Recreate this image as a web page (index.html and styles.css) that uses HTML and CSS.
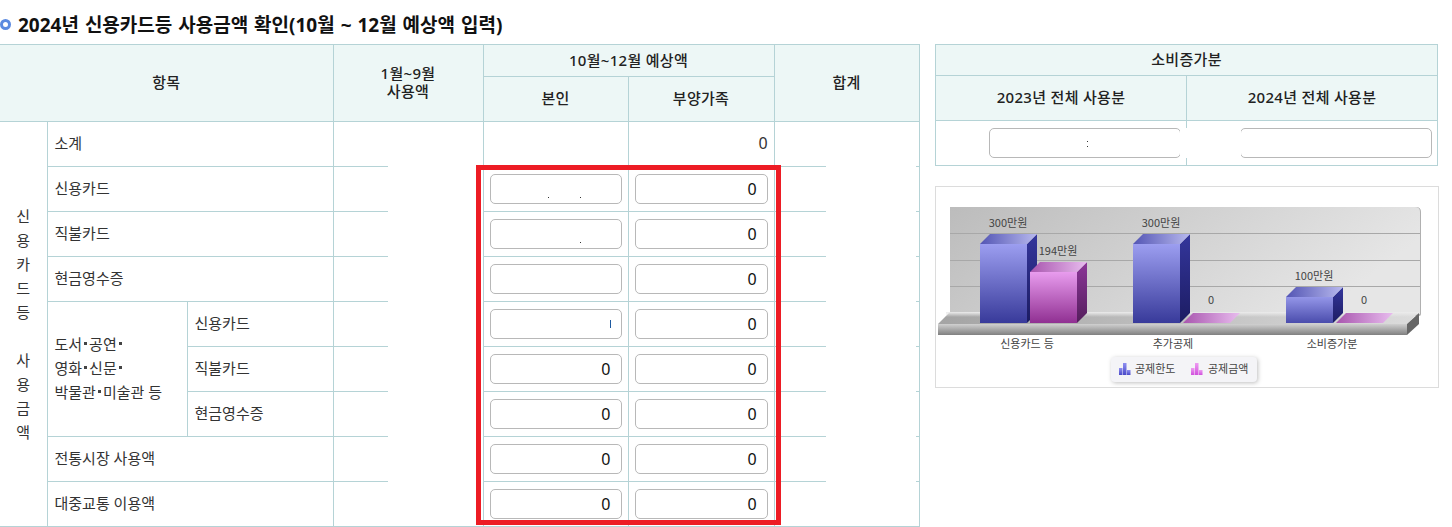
FILE: index.html
```html
<!DOCTYPE html>
<html lang="ko">
<head>
  <meta charset="UTF-8">
  <meta name="viewport" content="width=device-width, initial-scale=1.0">
  <title>신용카드등 사용금액 확인</title>
  <link rel="stylesheet" href="styles.css">
</head>
<body>

  <h2 class="section-title"><span class="title-ring"></span>2024년 신용카드등 사용금액 확인(10월 ~ 12월 예상액 입력)</h2>

  <div class="content">
    <!-- Usage table -->
    <div class="usage-wrap">
      <table class="usage-table">
        <colgroup>
          <col class="col-group">
          <col class="col-item">
          <col class="col-sub">
          <col class="col-used">
          <col class="col-self">
          <col class="col-family">
          <col class="col-total">
        </colgroup>
        <tr class="head-top">
          <th colspan="3" rowspan="2">항목</th>
          <th rowspan="2">1월~9월<br>사용액</th>
          <th colspan="2">10월~12월 예상액</th>
          <th rowspan="2">합계</th>
        </tr>
        <tr class="head-bottom">
          <th>본인</th>
          <th>부양가족</th>
        </tr>
        <tr>
          <td rowspan="9" class="group-label">신<br>용<br>카<br>드<br>등<br><br>사<br>용<br>금<br>액</td>
          <td colspan="2">소계</td>
          <td></td>
          <td></td>
          <td class="sum-value">0</td>
          <td></td>
        </tr>
        <tr>
          <td colspan="2">신용카드</td>
          <td></td>
          <td class="amount"><div class="field"><input type="text"><i class="speck speck-a"></i><i class="speck speck-b"></i></div></td>
          <td class="amount"><div class="field"><input type="text" value="0"></div></td>
          <td></td>
        </tr>
        <tr>
          <td colspan="2">직불카드</td>
          <td></td>
          <td class="amount"><div class="field"><input type="text"><i class="speck speck-b"></i></div></td>
          <td class="amount"><div class="field"><input type="text" value="0"></div></td>
          <td></td>
        </tr>
        <tr>
          <td colspan="2">현금영수증</td>
          <td></td>
          <td class="amount"><div class="field"><input type="text"></div></td>
          <td class="amount"><div class="field"><input type="text" value="0"></div></td>
          <td></td>
        </tr>
        <tr>
          <td rowspan="3" class="culture-label">도서<span class="mid-dot"></span>공연<span class="mid-dot"></span><br>영화<span class="mid-dot"></span>신문<span class="mid-dot"></span><br>박물관<span class="mid-dot"></span>미술관 등</td>
          <td>신용카드</td>
          <td></td>
          <td class="amount"><div class="field"><input type="text"><i class="speck speck-c"></i></div></td>
          <td class="amount"><div class="field"><input type="text" value="0"></div></td>
          <td></td>
        </tr>
        <tr>
          <td>직불카드</td>
          <td></td>
          <td class="amount"><div class="field"><input type="text" value="0"></div></td>
          <td class="amount"><div class="field"><input type="text" value="0"></div></td>
          <td></td>
        </tr>
        <tr>
          <td>현금영수증</td>
          <td></td>
          <td class="amount"><div class="field"><input type="text" value="0"></div></td>
          <td class="amount"><div class="field"><input type="text" value="0"></div></td>
          <td></td>
        </tr>
        <tr>
          <td colspan="2">전통시장 사용액</td>
          <td></td>
          <td class="amount"><div class="field"><input type="text" value="0"></div></td>
          <td class="amount"><div class="field"><input type="text" value="0"></div></td>
          <td></td>
        </tr>
        <tr>
          <td colspan="2">대중교통 이용액</td>
          <td></td>
          <td class="amount"><div class="field"><input type="text" value="0"></div></td>
          <td class="amount"><div class="field"><input type="text" value="0"></div></td>
          <td></td>
        </tr>
      </table>
      <div class="mask mask-used"></div>
      <div class="mask mask-total"></div>
      <div class="red-box"></div>
    </div>

    <div class="side">
      <!-- Increase table -->
      <div class="increase-wrap">
        <table class="increase-table">
          <tr class="inc-head-top">
            <th colspan="2">소비증가분</th>
          </tr>
          <tr class="inc-head-bottom">
            <th>2023년 전체 사용분</th>
            <th>2024년 전체 사용분</th>
          </tr>
          <tr class="inc-row">
            <td><div class="field field-wide"><input type="text"><i class="speck speck-d"></i><i class="speck speck-e"></i></div></td>
            <td><div class="field field-wide"><input type="text"></div></td>
          </tr>
        </table>
        <div class="mask mask-inc"></div>
      </div>

      <!-- Chart -->
      <div class="chart-box">
        <svg class="chart" viewBox="936 187 502 200" width="502" height="200">
          <defs>
            <linearGradient id="wall" x1="0" y1="0" x2="1" y2="0.3">
              <stop offset="0" stop-color="#bcbcbc"/>
              <stop offset="1" stop-color="#e6e6e6"/>
            </linearGradient>
            <linearGradient id="floorTop" x1="0" y1="0" x2="1" y2="0">
              <stop offset="0" stop-color="#a4a4a4"/>
              <stop offset="1" stop-color="#dcdcdc"/>
            </linearGradient>
            <linearGradient id="floorBand" x1="0" y1="0" x2="0" y2="1">
              <stop offset="0" stop-color="#ececec"/>
              <stop offset="1" stop-color="#ececec" stop-opacity="0"/>
            </linearGradient>
            <linearGradient id="floorFront" x1="0" y1="0" x2="0" y2="1">
              <stop offset="0" stop-color="#d0d0d0"/>
              <stop offset="1" stop-color="#808080"/>
            </linearGradient>
            <linearGradient id="blueFront" x1="0" y1="0" x2="0" y2="1">
              <stop offset="0" stop-color="#9c9ef0"/>
              <stop offset="1" stop-color="#383a9a"/>
            </linearGradient>
            <linearGradient id="blueFrontShort" x1="0" y1="0" x2="0" y2="1">
              <stop offset="0" stop-color="#9496e8"/>
              <stop offset="1" stop-color="#4a4cac"/>
            </linearGradient>
            <linearGradient id="blueSide" x1="0" y1="0" x2="0" y2="1">
              <stop offset="0" stop-color="#34369c"/>
              <stop offset="1" stop-color="#1c1c62"/>
            </linearGradient>
            <linearGradient id="blueTop" x1="0" y1="0" x2="1" y2="0">
              <stop offset="0" stop-color="#5355b4"/>
              <stop offset="1" stop-color="#b8b9ee"/>
            </linearGradient>
            <linearGradient id="pinkFront" x1="0" y1="0" x2="0" y2="1">
              <stop offset="0" stop-color="#e89cee"/>
              <stop offset="1" stop-color="#903092"/>
            </linearGradient>
            <linearGradient id="pinkSide" x1="0" y1="0" x2="0" y2="1">
              <stop offset="0" stop-color="#8c3698"/>
              <stop offset="1" stop-color="#541e5c"/>
            </linearGradient>
            <linearGradient id="pinkTop" x1="0" y1="0" x2="1" y2="0">
              <stop offset="0" stop-color="#a855ae"/>
              <stop offset="1" stop-color="#e8bcee"/>
            </linearGradient>
            <linearGradient id="iconBlue" x1="0" y1="0" x2="0" y2="1">
              <stop offset="0" stop-color="#8f8ff0"/>
              <stop offset="1" stop-color="#4a4ac8"/>
            </linearGradient>
            <linearGradient id="iconPink" x1="0" y1="0" x2="0" y2="1">
              <stop offset="0" stop-color="#ee9cf2"/>
              <stop offset="1" stop-color="#d050dc"/>
            </linearGradient>
          </defs>

          <path d="M951 207H1416Q1421 207 1421 212V314Q1421 316 1419 316H951Z" fill="#b0b0b0"/>
          <path d="M950 207H1415Q1420 207 1420 212V314H950Z" fill="url(#wall)"/>
          <path d="M950 233.5H1420M950 260.5H1420M950 286.5H1420" stroke="#a8a8a8" stroke-width="1" fill="none"/>

          <polygon points="938,324 950,312 1419,312 1407,324" fill="url(#floorTop)"/>
          <rect x="946" y="312" width="473" height="5" fill="url(#floorBand)"/>
          <rect x="938" y="324" width="469" height="11" fill="url(#floorFront)"/>
          <polygon points="1407,324 1419,313 1419,324 1407,335" fill="#666666"/>

          <polygon points="1027,244 1037,234 1037,313 1027,323" fill="url(#blueSide)"/>
          <polygon points="980,244 990,234 1037,234 1027,244" fill="url(#blueTop)"/>
          <rect x="980" y="244" width="47" height="79" fill="url(#blueFront)"/>

          <polygon points="1077,272 1087,262 1087,313 1077,323" fill="url(#pinkSide)"/>
          <polygon points="1030,272 1040,262 1087,262 1077,272" fill="url(#pinkTop)"/>
          <rect x="1030" y="272" width="47" height="51" fill="url(#pinkFront)"/>

          <polygon points="1180,244 1190,234 1190,313 1180,323" fill="url(#blueSide)"/>
          <polygon points="1133,244 1143,234 1190,234 1180,244" fill="url(#blueTop)"/>
          <rect x="1133" y="244" width="47" height="79" fill="url(#blueFront)"/>

          <polygon points="1183,323 1193,313 1240,313 1230,323" fill="url(#pinkTop)"/>

          <polygon points="1333,297 1343,287 1343,313 1333,323" fill="url(#blueSide)"/>
          <polygon points="1286,297 1296,287 1343,287 1333,297" fill="url(#blueTop)"/>
          <rect x="1286" y="297" width="47" height="26" fill="url(#blueFrontShort)"/>

          <polygon points="1336,323 1346,313 1393,313 1383,323" fill="url(#pinkTop)"/>

          <g class="bar-label">
            <text x="1008" y="227">300만원</text>
            <text x="1058" y="255">194만원</text>
            <text x="1161" y="227">300만원</text>
            <text x="1211" y="304">0</text>
            <text x="1314" y="280">100만원</text>
            <text x="1364" y="304">0</text>
          </g>
          <g class="cat-label">
            <text x="1027" y="348">신용카드 등</text>
            <text x="1173" y="348">추가공제</text>
            <text x="1332" y="348">소비증가분</text>
          </g>

          <rect x="1111" y="357" width="146" height="25" rx="4" fill="#f4f4f7" class="legend-box"/>
          <g fill="url(#iconBlue)">
            <rect x="1119" y="368" width="3.5" height="7"/>
            <rect x="1123" y="363" width="3.5" height="12"/>
            <rect x="1127" y="370" width="3.5" height="5"/>
          </g>
          <g fill="url(#iconPink)">
            <rect x="1191" y="368" width="3.5" height="7"/>
            <rect x="1195" y="363" width="3.5" height="12"/>
            <rect x="1199" y="370" width="3.5" height="5"/>
          </g>
          <g class="legend-label">
            <text x="1135" y="373">공제한도</text>
            <text x="1208" y="373">공제금액</text>
          </g>
        </svg>
      </div>
    </div>
  </div>

</body>
</html>
```

FILE: styles.css
```css
* {
  box-sizing: border-box;
}

html,
body {
  height: 527px;
  overflow: hidden;
}

body {
  margin: 0;
  background-color: #ffffff;
  font-family: "Noto Sans", "Noto Sans CJK KR", sans-serif;
  color: #333;
}

.section-title {
  display: flex;
  align-items: center;
  gap: 7px;
  height: 44px;
  margin: 0;
  padding-top: 4px;
  font-family: "Noto Sans", "Noto Sans CJK KR", sans-serif;
  font-size: 19px;
  font-weight: 700;
  word-spacing: 1px;
  color: #111;
  white-space: nowrap;
}

.title-ring {
  width: 11px;
  height: 11px;
  border: 3px solid #5b8ae0;
  border-radius: 50%;
}

.content {
  display: flex;
  align-items: flex-start;
  gap: 16px;
}

table {
  border-collapse: collapse;
  table-layout: fixed;
}

th,
td {
  border: 1px solid #b5d3d6;
  padding: 0;
  font-size: 15px;
  font-weight: 400;
}

th {
  background-color: #edf7f6;
  color: #222;
  font-weight: 500;
  text-align: center;
  line-height: 18px;
  letter-spacing: 0.3px;
  padding-bottom: 2px;
}

/* Usage table */
.usage-wrap {
  position: relative;
  width: 919px;
}

.usage-table {
  width: 919px;
}

.usage-table tr > :first-child {
  border-left: none;
}

.col-group { width: 47px; }
.col-item { width: 140px; }
.col-sub { width: 146px; }
.col-used { width: 150px; }
.col-self { width: 145px; }
.col-family { width: 146px; }
.col-total { width: 145px; }

.head-top { height: 32px; }
.head-bottom { height: 45px; }

.usage-table td {
  height: 45px;
  padding: 0 0 4px 7px;
}

.usage-table td.group-label {
  padding: 0;
  text-align: center;
  line-height: 24px;
}

.usage-table td.culture-label {
  padding-bottom: 2px;
  line-height: 24px;
}

.mid-dot {
  display: inline-block;
  width: 3px;
  height: 3px;
  margin: 0 2px;
  background-color: #444;
  vertical-align: 5px;
}

.usage-table td.sum-value {
  padding: 0 6px 2px 0;
  text-align: right;
  font-size: 16px;
}

.usage-table td.amount {
  padding: 0 6px;
}

/* Inputs */
.field {
  position: relative;
}

.field input {
  display: block;
  width: 100%;
  height: 30px;
  padding: 0 10px;
  border: 1px solid #b8b8b8;
  border-radius: 5px;
  background-color: #fff;
  font-family: "Noto Sans", sans-serif;
  font-size: 16px;
  color: #111;
  text-align: right;
}

.speck {
  position: absolute;
  top: 23px;
  width: 1px;
  height: 1px;
  background-color: #333;
}

.speck-a { left: 58px; }
.speck-b { left: 90px; }

.speck-c {
  top: 11px;
  left: 120px;
  height: 8px;
  background-color: #1e5aa0;
}

.speck-d {
  top: 13px;
  left: 98px;
}

.speck-e {
  top: 18px;
  left: 98px;
}

/* White patches and the red marker over the table */
.mask {
  position: absolute;
  background-color: #fff;
}

.mask-used {
  top: 122px;
  left: 388px;
  width: 95px;
  height: 360px;
}

.mask-total {
  top: 122px;
  left: 826px;
  width: 90px;
  height: 360px;
}

.red-box {
  position: absolute;
  top: 121px;
  left: 476px;
  width: 305px;
  height: 360px;
  border: 5px solid #ed1c24;
}

/* Side column */
.side {
  display: flex;
  flex-direction: column;
  gap: 20px;
  width: 504px;
}

.increase-wrap {
  position: relative;
}

.increase-table {
  width: 503px;
}

.inc-head-top { height: 31px; }
.inc-head-bottom { height: 45px; }
.inc-row { height: 45px; }

.inc-row td {
  padding-right: 5px;
}

.field-wide {
  width: 192px;
  margin-left: auto;
}

.mask-inc {
  top: 84px;
  left: 245px;
  width: 61px;
  height: 30px;
}

.chart-box {
  height: 202px;
  border: 1px solid #dcdcdc;
}

.chart {
  display: block;
}

.chart text {
  font-family: "Noto Sans CJK KR", sans-serif;
  font-size: 11px;
  fill: #444;
}

.bar-label text,
.cat-label text {
  text-anchor: middle;
}

.legend-box {
  filter: drop-shadow(1px 1px 2px rgba(0, 0, 0, 0.25));
}
```
